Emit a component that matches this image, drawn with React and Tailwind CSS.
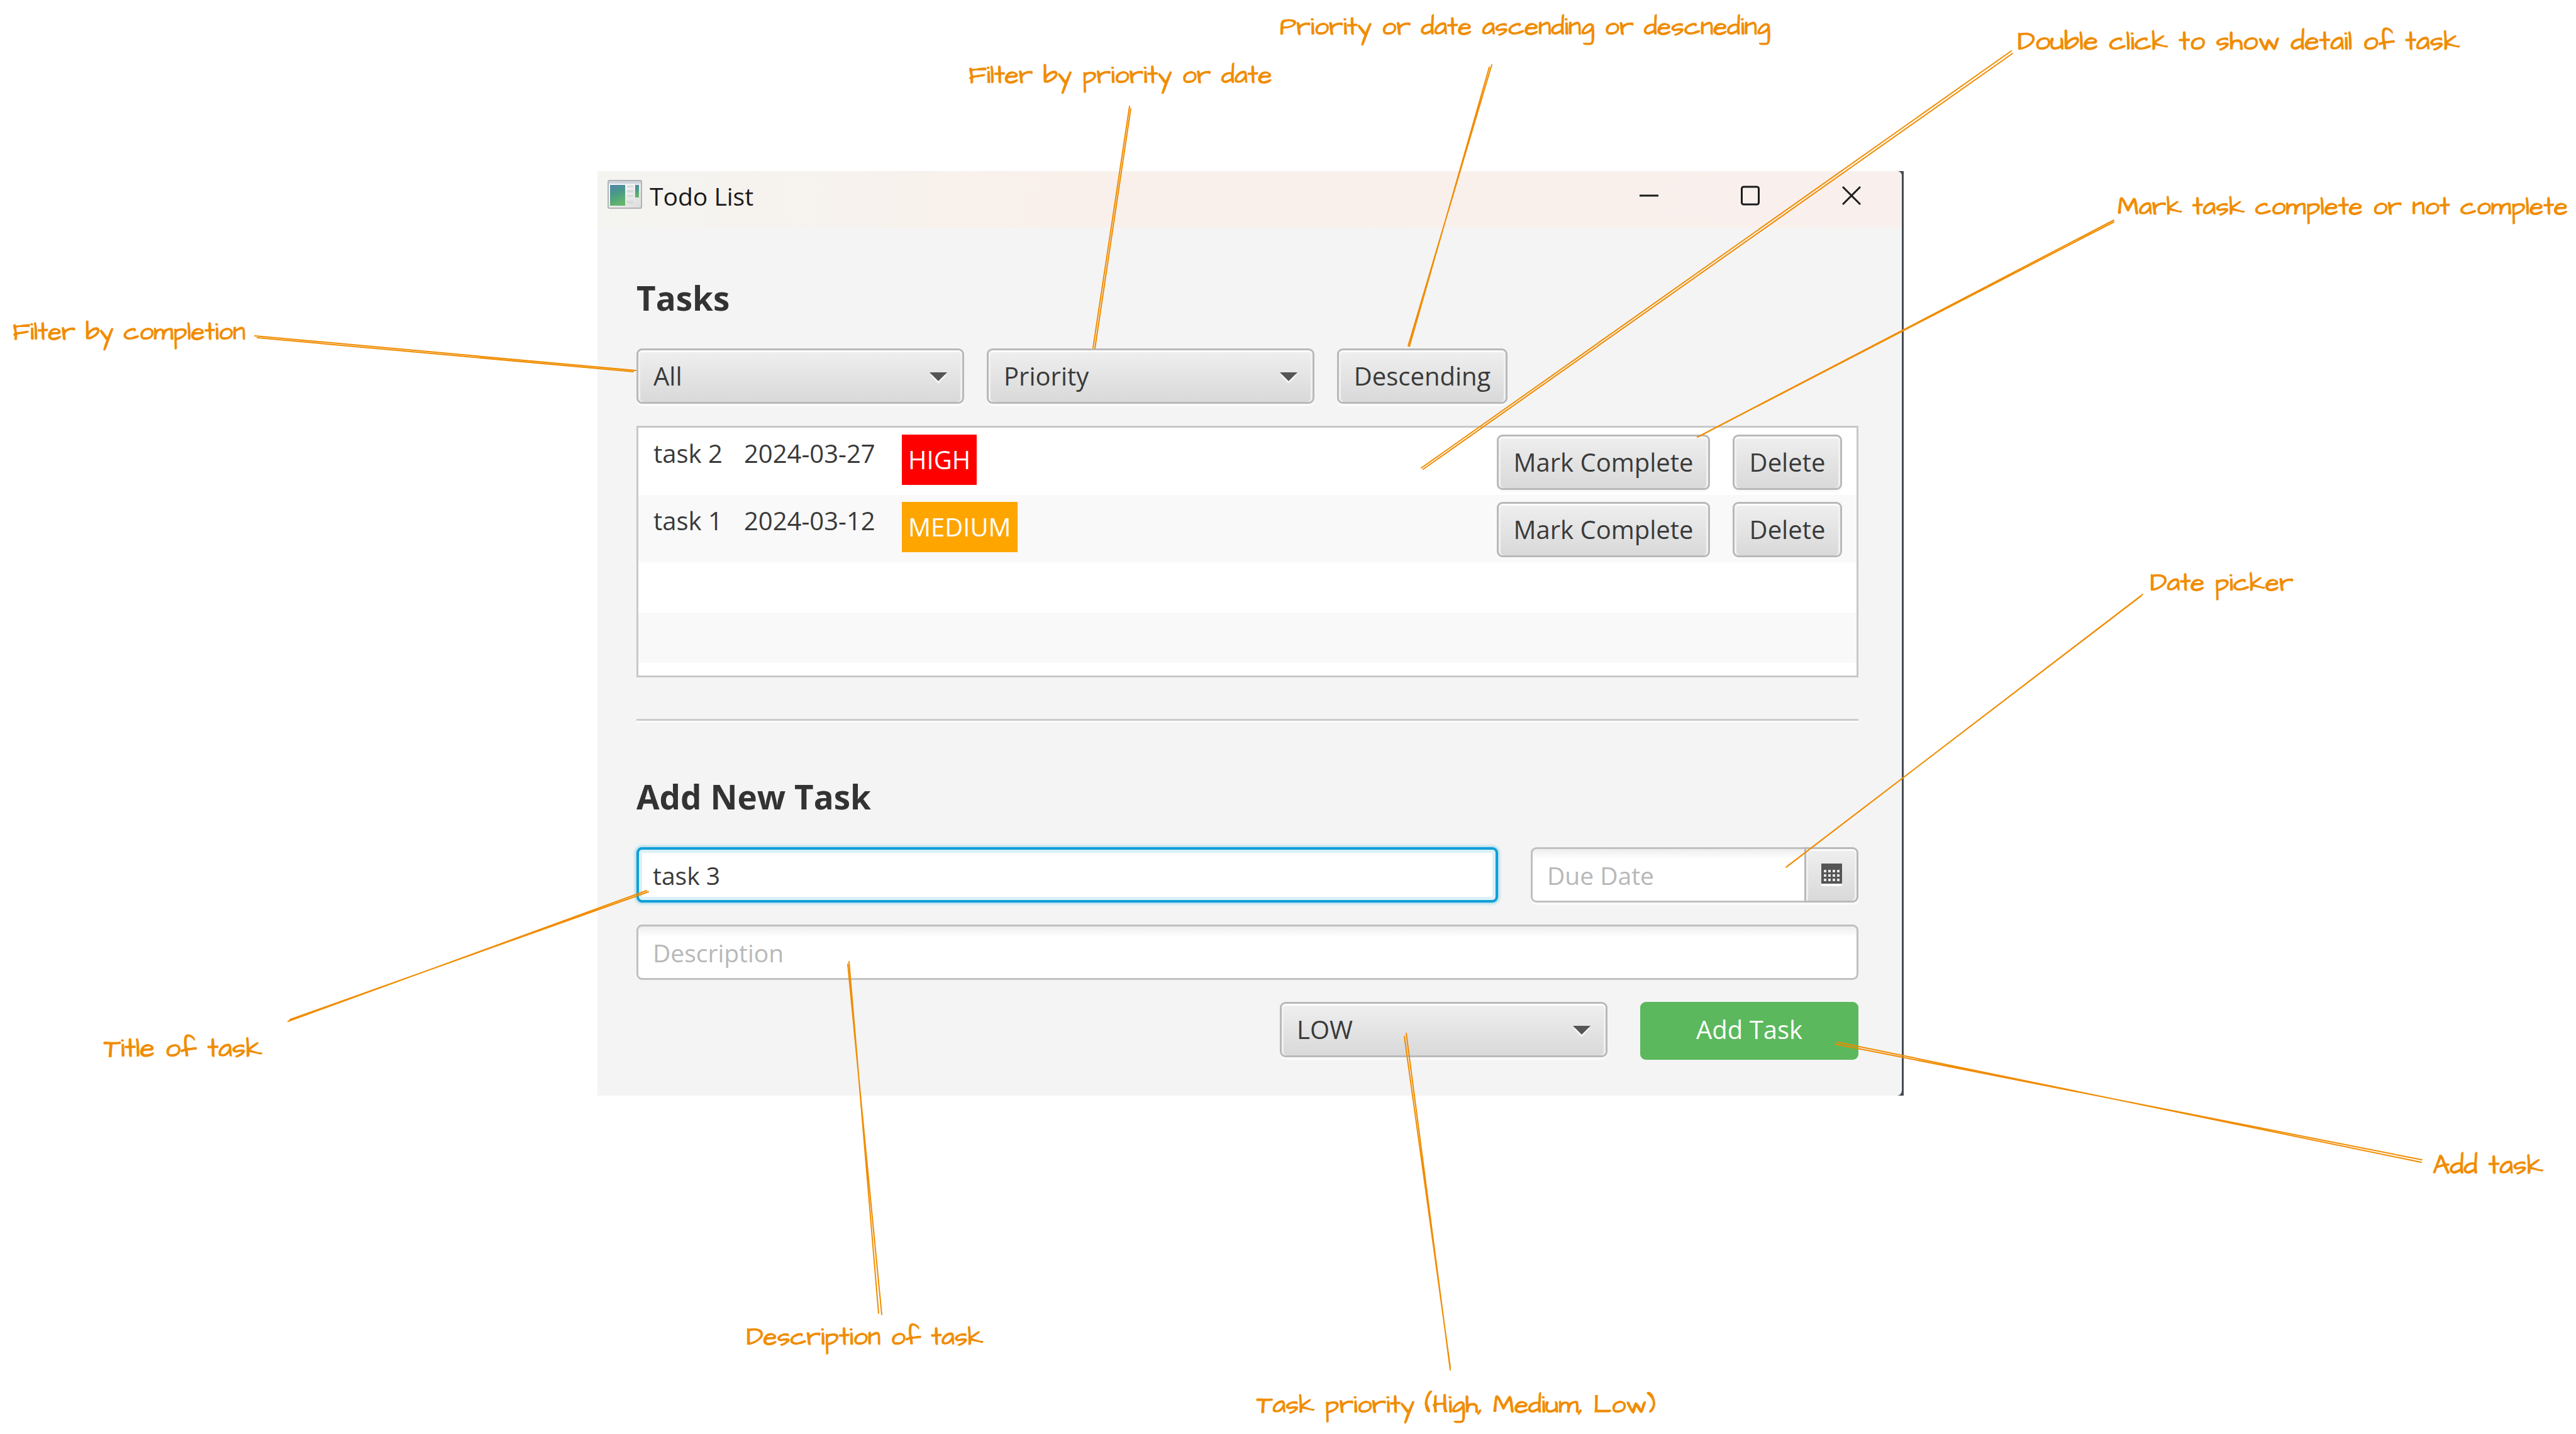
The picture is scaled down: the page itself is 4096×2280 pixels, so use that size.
import { useState } from "react";

const CONTROL =
  "h-[88px] rounded-[9px] border-[3px] border-[#b9b9b9] bg-linear-to-b from-[#efefef] to-[#d9d9d9] shadow-[inset_0_3px_0_#fcfcfc,inset_3px_0_0_#f1f1f1,inset_-3px_0_0_#f1f1f1,0_4px_0_#fafafa] text-[40px] text-[#3a3a3a]";
const FIELD =
  "h-[88px] min-w-0 rounded-[9px] border-[3px] border-[#c0c0c0] bg-linear-to-b from-[#eeeeee] via-white via-20% to-white px-[23px] text-[39px] text-[#3a3a3a] outline-none placeholder:text-[#b8b8b8] placeholder:opacity-100";

function Combo({ label, options, initial }) {
  return (
    <div className="relative w-[521px]">
      <select
        aria-label={label}
        defaultValue={initial}
        className={`${CONTROL} block w-full appearance-none pl-[24px] pr-20`}
      >
        {options.map((o) => (
          <option key={o}>{o}</option>
        ))}
      </select>
      <svg
        viewBox="0 0 28 18"
        className="pointer-events-none absolute right-[27px] top-[38px] h-[18px] w-7"
        aria-hidden="true"
      >
        <path d="M1 4h26L14 18z" fill="#f8f8f8" />
        <path d="M0 0h28L14 14z" fill="#555555" />
      </svg>
    </div>
  );
}

function PushButton({ children, className, onClick }) {
  return (
    <button type="button" onClick={onClick} className={`${CONTROL} whitespace-nowrap ${className}`}>
      {children}
    </button>
  );
}

function AppIcon() {
  return (
    <svg viewBox="0 0 55 46" className="h-[46px] w-[55px]" aria-hidden="true">
      <defs>
        <linearGradient id="pane" x1="0" y1="0" x2="0.3" y2="1">
          <stop offset="0" stopColor="#4f86ad" />
          <stop offset="0.5" stopColor="#4a9a86" />
          <stop offset="1" stopColor="#62b56c" />
        </linearGradient>
        <linearGradient id="frame" x1="0" y1="0" x2="1" y2="1">
          <stop offset="0" stopColor="#ffffff" />
          <stop offset="1" stopColor="#dcdcdc" />
        </linearGradient>
      </defs>
      <rect x="1" y="1" width="53" height="44" rx="2" fill="url(#frame)" stroke="#b0b3b6" strokeWidth="2" />
      <rect x="2" y="2" width="51" height="4" fill="#cdd5df" />
      <rect x="4" y="8" width="24" height="33" fill="url(#pane)" />
      <path d="M31 9h10v3H31zM31 16h10v4H31zM31 24h10v3H31zM31 33h10v5H31z" fill="#d9dadb" />
      <rect x="44" y="8" width="6" height="20" fill="url(#pane)" />
    </svg>
  );
}

function CalendarIcon() {
  return (
    <svg viewBox="0 0 33 36" className="h-9 w-[33px]" aria-hidden="true">
      <rect x="0" y="4" width="33" height="32" fill="#fafafa" />
      <rect x="0" y="0" width="33" height="32" fill="#555555" />
      {[10, 17, 24].map((y) =>
        [4, 11, 18, 25].map((x) => (
          <rect key={`${x}-${y}`} x={x} y={y} width="4" height="4" fill="#e6e6e6" />
        ))
      )}
    </svg>
  );
}

const TASKS = [
  { name: "task 2", date: "2024-03-27", priority: "HIGH", badge: "bg-[#ff0000]", row: "bg-white" },
  { name: "task 1", date: "2024-03-12", priority: "MEDIUM", badge: "bg-[#ffa500]", row: "bg-[#f9f9f9]" },
];

function TaskRow({ task }) {
  const [done, setDone] = useState(false);
  return (
    <li className={`flex h-[107px] items-start pl-[24px] pr-[23px] pt-[11px] text-[40px] ${task.row}`}>
      <span className="w-[144px] leading-[60px]">{task.name}</span>
      <span className="w-[251px] leading-[60px]">{task.date}</span>
      <span className={`px-[10px] leading-[80px] text-white ${task.badge}`}>{task.priority}</span>
      <div className="ml-auto flex gap-9">
        <PushButton className="w-[339px]" onClick={() => setDone(!done)}>
          {done ? "Mark Incomplete" : "Mark Complete"}
        </PushButton>
        <PushButton className="w-[174px]">Delete</PushButton>
      </div>
    </li>
  );
}

function TitleBar() {
  return (
    <header className="flex h-[90px] items-start bg-linear-to-r from-[#f4f4f0] via-[#f9f0eb] via-35% to-[#f9f0ed] pl-4 pt-[14px]">
      <AppIcon />
      <h1 className="ml-3 mt-[2px] text-[39px] leading-[48px] text-[#1a1a1a]">Todo List</h1>
      <div className="ml-auto mr-[65px] mt-[9px] flex gap-[131px] text-[#1a1a1a]">
        <button type="button" aria-label="Minimize">
          <svg viewBox="0 0 30 32" className="block h-8 w-[30px]" fill="none" stroke="currentColor" strokeWidth="3">
            <path d="M0 16h30" />
          </svg>
        </button>
        <button type="button" aria-label="Maximize">
          <svg viewBox="0 0 30 32" className="block h-8 w-[30px]" fill="none" stroke="currentColor" strokeWidth="3">
            <rect x="1.5" y="2" width="27" height="28" rx="3" />
          </svg>
        </button>
        <button type="button" aria-label="Close">
          <svg viewBox="0 0 30 32" className="block h-8 w-[30px]" fill="none" stroke="currentColor" strokeWidth="3">
            <path d="M1 2l28 28M29 2L1 30" />
          </svg>
        </button>
      </div>
    </header>
  );
}

function TodoWindow() {
  const [descending, setDescending] = useState(true);
  return (
    <section className="bg-[#454b52] pr-[3px] font-['Open_Sans','Noto_Sans',sans-serif] text-[39px] text-[#3a3a3a]">
      <div className="overflow-hidden rounded-r-[8px] bg-[#f4f4f4]">
        <TitleBar />
        <div className="pb-[57px] pl-[62px] pr-[69px] pt-[76px]">
          <h2 className="text-[53px] font-bold leading-[72px] text-[#333333]">Tasks</h2>
          <div className="mt-[44px] flex gap-9">
            <Combo label="Filter by completion" initial="All" options={["All", "Complete", "Not complete"]} />
            <Combo label="Sort by" initial="Priority" options={["Priority", "Date"]} />
            <PushButton className="w-[271px]" onClick={() => setDescending(!descending)}>
              {descending ? "Descending" : "Ascending"}
            </PushButton>
          </div>
          <ul className="mt-[35px] border-[3px] border-[#c8c8c8] bg-white pb-[20px]">
            {TASKS.map((t) => (
              <TaskRow key={t.name} task={t} />
            ))}
            <li className="h-[80px] bg-white" aria-hidden="true" />
            <li className="h-[80px] bg-[#f9f9f9]" aria-hidden="true" />
          </ul>
          <hr className="mt-[66px] border-b-[3px] border-t-[3px] border-b-[#fbfbfb] border-t-[#cbcbcb]" />
          <form onSubmit={(e) => e.preventDefault()}>
            <h2 className="mt-[82px] text-[53px] font-bold leading-[72px] text-[#333333]">Add New Task</h2>
            <div className="mt-[44px] flex gap-[52px]">
              <input
                aria-label="Title"
                defaultValue="task 3"
                className="h-[88px] min-w-0 flex-1 rounded-[9px] border-4 border-[#0f9fd8] bg-white px-[22px] text-[39px] text-[#3a3a3a] shadow-[inset_0_0_0_5px_#dbf0f8,0_0_4px_2px_#9fd6ec] outline-none"
              />
              <div className="flex w-[521px] rounded-[9px] shadow-[0_4px_0_#fafafa]">
                <input aria-label="Due date" placeholder="Due Date" className={`${FIELD} flex-1 rounded-r-none border-r-0`} />
                <button
                  type="button"
                  aria-label="Open calendar"
                  className={`${CONTROL} flex w-[86px] items-center justify-center rounded-l-none`}
                >
                  <CalendarIcon />
                </button>
              </div>
            </div>
            <div className="mt-[35px] flex">
              <input aria-label="Description" placeholder="Description" className={`${FIELD} flex-1`} />
            </div>
            <div className="mt-[35px] flex justify-end gap-[52px]">
              <Combo label="Task priority" initial="LOW" options={["LOW", "MEDIUM", "HIGH"]} />
              <button type="submit" className="h-[92px] w-[347px] rounded-[9px] bg-[#5cb85c] pb-1 text-[40px] text-white">
                Add Task
              </button>
            </div>
          </form>
        </div>
      </div>
    </section>
  );
}

const NOTES = [
  { text: "Filter by completion", at: "left-[20px] top-[503px] text-[40px]" },
  { text: "Filter by priority or date", at: "left-[1540px] top-[95px] text-[41px]" },
  { text: "Priority or date ascending or descneding", at: "left-[2035px] top-[18px] text-[41px]" },
  { text: "Double click to show detail of task", at: "left-[3208px] top-[41px] text-[43px]" },
  { text: "Mark task complete or not complete", at: "left-[3367px] top-[304px] text-[41px]" },
  { text: "Date picker", at: "left-[3419px] top-[902px] text-[41px]" },
  { text: "Add task", at: "left-[3868px] top-[1828px] text-[43px]" },
  { text: "Title of task", at: "left-[165px] top-[1642px] text-[43px]" },
  { text: "Description of task", at: "left-[1187px] top-[2101px] text-[41px]" },
  { text: "Task priority (High, Medium, Low)", at: "left-[1998px] top-[2209px] text-[41px]" },
];

const POINTERS = [
  "M405 534L1011 589M409 537L1007 591",
  "M1796 169L1738 553M1798 173L1741 554",
  "M2372 103L2239 550M2368 107L2241 551",
  "M3198 81L2260 744M3200 85L2263 746",
  "M3361 350L2699 695M3361 353L2705 692",
  "M3407 945L2840 1379M3404 948L2842 1377",
  "M2918 1660L3851 1844M2922 1657L3850 1848",
  "M1028 1416L458 1624M1031 1418L461 1621",
  "M1350 1529L1397 2088M1348 1533L1402 2090",
  "M2236 1643L2306 2178M2233 1648L2306 2174",
];

export default function App() {
  return (
    <main className="relative min-h-screen overflow-hidden bg-white">
      <div className="pl-[950px] pr-[1069px] pt-[272px]">
        <TodoWindow />
      </div>
      <svg
        viewBox="0 0 4096 2280"
        className="pointer-events-none absolute left-0 top-0 w-full"
        fill="none"
        stroke="#f08c00"
        strokeWidth="2"
        strokeLinecap="round"
        aria-hidden="true"
      >
        {POINTERS.map((d) => (
          <path key={d} d={d} />
        ))}
      </svg>
      {NOTES.map((n) => (
        <p
          key={n.text}
          className={`absolute whitespace-nowrap font-['Architects_Daughter','Comic_Neue','Lato',sans-serif] leading-[52px] text-[#f08c00] [-webkit-text-stroke:1px_#f08c00] ${n.at}`}
        >
          {n.text}
        </p>
      ))}
    </main>
  );
}
